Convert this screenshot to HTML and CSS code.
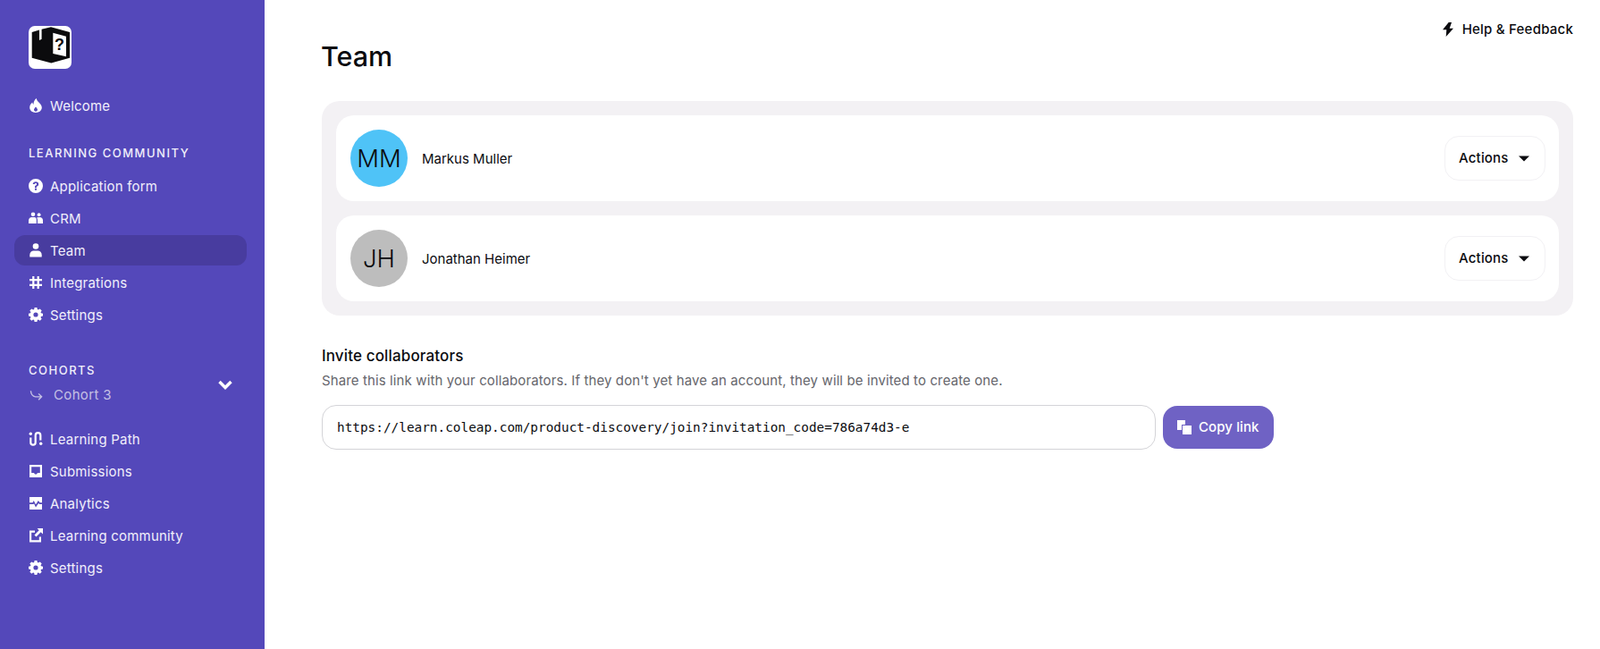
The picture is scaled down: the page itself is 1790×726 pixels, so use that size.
FILE: index.html
```html
<!DOCTYPE html>
<html lang="en">
<head>
<meta charset="utf-8">
<title>Team</title>
<link rel="stylesheet" href="styles.css">
</head>
<body>
<svg class="defs" width="0" height="0" aria-hidden="true">
  <symbol id="gear" viewBox="0 0 16 16">
    <path fill-rule="evenodd" d="M6.600 0h2.800l.4 2.100 1.100.5 1.800-1.200 2 2-1.200 1.800.5 1.100 2 .4v2.800l-2 .4-.5 1.100 1.200 1.800-2 2-1.800-1.200-1.100.5-.4 2H6.600l-.4-2-1.100-.5-1.800 1.200-2-2 1.200-1.800-.5-1.100-2-.4V6.700l2-.4.5-1.100-1.200-1.800 2-2 1.800 1.200 1.100-.5zM8 5.400a2.600 2.600 0 1 0 0 5.200 2.600 2.600 0 0 0 0-5.200z"/>
  </symbol>
</svg>
<div class="app">
  <aside class="sidebar">
    <svg class="logo" viewBox="0 0 48 48">
      <rect width="48" height="48" rx="7" fill="#fff"/>
      <path fill="#0b0b0d" d="M3.700 7 12 4.600V16l2.600-1.200V3.800L25 1.300 46 7v28.700L25.300 41.500 3.700 35.700z"/>
      <path fill="#fff" d="M27.300 7.700 42 11.700v22.600L27.300 31z"/>
      <text class="logo-q" x="34.600" y="27">?</text>
    </svg>

    <a class="nav-item nav-welcome">
      <svg class="icon" viewBox="0 0 16 16"><path fill-rule="evenodd" d="M8.800 0c.3 2.200 1.500 3.400 2.900 4.800C13.200 6.300 14.800 8 14.800 10.300c0 3.500-3 5.700-6.800 5.700s-6.800-2.200-6.800-5.700c0-2.500 1.300-4.300 3-5.700.1 1 .5 1.800 1.200 2.300C5.500 4.200 6.600 1.500 8.800 0zM8 9.400c-.9 1.100-2 2.100-2 3.400 0 1.100.9 1.900 2 1.900s2-.8 2-1.900c0-1.300-1.100-2.300-2-3.400z"/></svg>
      <span>Welcome</span>
    </a>

    <div class="section-label section-community">LEARNING COMMUNITY</div>
    <nav class="nav-list">
      <a class="nav-item">
        <svg class="icon" viewBox="0 0 16 16"><path fill-rule="evenodd" d="M8 0a8 8 0 1 1 0 16A8 8 0 0 1 8 0zM8 3.200c-1.900 0-3.200 1.100-3.300 2.800h2c.1-.6.500-1 1.200-1s1.200.4 1.200 1c0 .5-.3.800-.9 1.200-.9.600-1.300 1.200-1.200 2.300v.4h1.900v-.3c0-.6.200-.9.900-1.300.9-.6 1.400-1.300 1.400-2.400 0-1.600-1.300-2.700-3.200-2.700zM8 10.600a1.150 1.150 0 1 0 0 2.300 1.150 1.150 0 0 0 0-2.300z"/></svg>
        <span>Application form</span>
      </a>
      <a class="nav-item">
        <svg class="icon" viewBox="0 0 16 16"><circle cx="5" cy="3.800" r="2.300"/><circle cx="11.600" cy="4.200" r="1.900"/><path d="M0 14v-3.200C0 8.500 1.500 7 3.500 7h3C8 7 8.800 8 8.800 10v4zM10 14v-4c0-1-.3-1.800-.8-2.500.5-.3 1-.5 1.800-.5h1.500C14.600 7 16 8.400 16 10.400V14z"/></svg>
        <span>CRM</span>
      </a>
      <a class="nav-item is-active">
        <svg class="icon" viewBox="0 0 16 16"><circle cx="8" cy="3.500" r="3.300"/><path d="M1.300 15.500v-2.300c0-2.700 1.900-4.700 4.500-4.700h4.400c2.600 0 4.500 2 4.500 4.700v2.300z"/></svg>
        <span>Team</span>
      </a>
      <a class="nav-item">
        <svg class="icon" viewBox="0 0 16 16"><path fill-rule="evenodd" d="M4.200 1h2.200v3h3.200V1h2.200v3H15v2.200h-3.200v3.600H15V12h-3.200v3H9.600v-3H6.400v3H4.200v-3H1V9.800h3.200V6.200H1V4h3.200zM6.400 6.200v3.600h3.200V6.200z"/></svg>
        <span>Integrations</span>
      </a>
      <a class="nav-item">
        <svg class="icon"><use href="#gear"/></svg>
        <span>Settings</span>
      </a>
    </nav>

    <div class="cohort-picker">
      <div class="cohort-text">
        <div class="section-label">COHORTS</div>
        <div class="cohort-name">
          <svg class="cohort-arrow" viewBox="0 0 16 16"><path d="M1.500 3.500C2 8.500 3.500 10 7 10.500h7.500M10.800 6.800l3.700 3.700-3.700 3.700"/></svg>
          <span>Cohort 3</span>
        </div>
      </div>
      <svg class="chevron" viewBox="0 0 16 12"><path d="M1.500 3 8 9.500 14.500 3"/></svg>
    </div>

    <nav class="nav-list">
      <a class="nav-item">
        <svg class="icon" viewBox="0 0 16 16"><circle cx="2.300" cy="2.300" r="1.700"/><circle cx="13.700" cy="13.300" r="1.700"/><path class="route" d="M2.300 6.500v5.500a2.700 2.700 0 0 0 5.400 0V4a2.700 2.700 0 0 1 5.600 0v5.500"/></svg>
        <span>Learning Path</span>
      </a>
      <a class="nav-item">
        <svg class="icon" viewBox="0 0 16 16"><path fill-rule="evenodd" d="M1 1h14v14H1zM3.200 3.200v6.800h2.800l1 1.600h2l1-1.600h2.800V3.200z"/></svg>
        <span>Submissions</span>
      </a>
      <a class="nav-item">
        <svg class="icon" viewBox="0 0 16 16"><path d="M1 1h14v6.200h-2.300L10.800 5 8 9.500 5.800 5 4.500 7.200H1zM1 9h4.500l.5-.8L8 12.500l3.200-4.700.7 1.200H15v6H1z"/></svg>
        <span>Analytics</span>
      </a>
      <a class="nav-item">
        <svg class="icon" viewBox="0 0 16 16"><path d="M1 2.500h6v2.200H3.200v8.600h8.600V9.500H14V15.500H1z"/><path d="M9.600 0H16v6.400l-2.300-2.100-5.200 5.200-2-2 5.200-5.200z"/></svg>
        <span>Learning community</span>
      </a>
      <a class="nav-item">
        <svg class="icon"><use href="#gear"/></svg>
        <span>Settings</span>
      </a>
    </nav>
  </aside>

  <main class="main">
    <div class="topbar">
      <a class="help">
        <svg class="bolt" viewBox="0 0 12 16"><path d="M6.700 0 0 8.300h4.300L3.700 16 12 6.700H7.700L10 0z"/></svg>
        <span>Help &amp; Feedback</span>
      </a>
    </div>
    <h1 class="title">Team</h1>

    <section class="team-panel">
      <div class="member">
        <div class="avatar avatar-blue">MM</div>
        <div class="member-name">Markus Muller</div>
        <button class="actions" type="button"><span class="btn-label">Actions</span><svg class="caret" viewBox="0 0 12 7"><path d="M0 .5h12L6 6.500z"/></svg></button>
      </div>
      <div class="member">
        <div class="avatar avatar-grey">JH</div>
        <div class="member-name">Jonathan Heimer</div>
        <button class="actions" type="button"><span class="btn-label">Actions</span><svg class="caret" viewBox="0 0 12 7"><path d="M0 .5h12L6 6.500z"/></svg></button>
      </div>
    </section>

    <h2 class="invite-title">Invite collaborators</h2>
    <p class="invite-text">Share this link with your collaborators. If they don't yet have an account, they will be invited to create one.</p>
    <div class="invite-row">
      <div class="link-field">https://learn.coleap.com/product-discovery/join?invitation_code=786a74d3-e</div>
      <button class="copy" type="button">
        <svg class="copy-icon" viewBox="0 0 16 16"><path d="M0 0h9v5H5v6H0z"/><path d="M6 6h10v10H6z"/></svg>
        <span class="btn-label">Copy link</span>
      </button>
    </div>
  </main>
</div>
</body>
</html>
```
FILE: styles.css
```css
* { box-sizing: border-box; }
html, body { margin: 0; height: 100%; }
body {
  font-family: Inter, "Liberation Sans", sans-serif;
  color: #0b0b0f;
  background: #fff;
  overflow: hidden;
}
.defs { position: absolute; }
.app { display: flex; height: 726px; }

.sidebar {
  width: 296px;
  flex: none;
  background: #5448ba;
  color: #f1effb;
  padding: 29px 20px 0 16px;
  display: flex;
  flex-direction: column;
}
.logo { width: 48px; height: 48px; margin-left: 16px; flex: none; }
.logo-q { font: 700 18px "Liberation Sans", sans-serif; fill: #0b0b0d; text-anchor: middle; }

.nav-list { display: flex; flex-direction: column; gap: 2px; }
.nav-item {
  height: 34px;
  display: flex;
  align-items: center;
  gap: 8px;
  padding-left: 16px;
  border-radius: 12px;
  font-size: 15px;
  letter-spacing: 0.2px;
}
.nav-welcome { margin-top: 24px; }
.is-active { background: #483c9f; }
.icon { width: 16px; height: 16px; fill: #fff; flex: none; }
.route { fill: none; stroke: #fff; stroke-width: 2.200; }

.section-label {
  font-size: 13px;
  font-weight: 500;
  line-height: 20px;
  letter-spacing: 1.500px;
  padding-left: 16px;
}
.section-community { margin: 26px 0 10px; }

.cohort-picker {
  display: flex;
  align-items: center;
  justify-content: space-between;
  margin: 35px 0 23px;
}
.cohort-text { display: flex; flex-direction: column; gap: 7px; }
.cohort-name {
  display: flex;
  align-items: center;
  gap: 12px;
  padding-left: 17px;
  height: 20px;
  font-size: 15px;
  letter-spacing: 0.35px;
  color: #c4c0e4;
}
.cohort-arrow { width: 15px; height: 15px; fill: none; stroke: #c4c0e4; stroke-width: 1.500; }
.chevron { width: 16px; height: 12px; margin: 4px 16px 0 0; fill: none; stroke: #fff; stroke-width: 3.400; }

.main { flex: 1; padding: 22px 30px 0 64px; min-width: 0; }
.topbar { display: flex; justify-content: flex-end; height: 21px; }
.help { display: flex; align-items: center; gap: 10px; font-size: 15px; font-weight: 500; letter-spacing: 0.22px; }
.bolt { width: 12px; height: 16px; fill: #0b0b0f; }
.title { margin: 0 0 0 -1px; height: 40px; font-size: 30.500px; line-height: 40px; font-weight: 500; }

.team-panel {
  margin-top: 30px;
  background: #f3f1f4;
  border-radius: 20px;
  padding: 16px;
  display: flex;
  flex-direction: column;
  gap: 16px;
}
.member {
  height: 96px;
  background: #fff;
  border-radius: 20px;
  padding: 0 15px 0 16px;
  display: flex;
  align-items: center;
  gap: 16px;
}
.avatar {
  width: 64px;
  height: 64px;
  border-radius: 50%;
  display: flex;
  align-items: center;
  justify-content: center;
  padding-bottom: 1px;
  font-size: 27.500px;
  font-weight: 300;
  flex: none;
}
.avatar-blue { background: #4fc3f7; }
.avatar-grey { background: #bdbdbd; }
.member-name { flex: 1; font-size: 15px; }
.actions {
  width: 113px;
  height: 50px;
  background: #fff;
  border: 1px solid #f2f1f4;
  border-radius: 16px;
  padding: 0 0 0 15px;
  display: flex;
  align-items: center;
  gap: 11px;
  font: 500 15px Inter, "Liberation Sans", sans-serif;
  letter-spacing: 0.2px;
  color: #0b0b0f;
}
.btn-label { padding-bottom: 2px; }
.caret { width: 12px; height: 7px; fill: #0b0b0f; }

.invite-title { margin: 34px 0 0; font-size: 17px; line-height: 22px; font-weight: 500; letter-spacing: 0.14px; }
.invite-text { margin: 6px 0 0; font-size: 15px; line-height: 22px; letter-spacing: 0.115px; color: #66666c; }
.invite-row { display: flex; align-items: center; gap: 8px; margin-top: 16px; }
.link-field {
  width: 933px;
  height: 50px;
  border: 1px solid #d4d4d8;
  border-radius: 16px;
  padding-left: 16px;
  display: flex;
  align-items: center;
  font: 14.380px "DejaVu Sans Mono", "Liberation Mono", monospace;
}
.copy {
  width: 124px;
  height: 48px;
  background: #6f62c4;
  border: 0;
  border-radius: 16px;
  padding: 0 0 0 16px;
  display: flex;
  align-items: center;
  gap: 8px;
  font: 500 15px Inter, "Liberation Sans", sans-serif;
  letter-spacing: 0.1px;
  color: #fff;
}
.copy-icon { width: 16px; height: 16px; fill: #fff; }
```
